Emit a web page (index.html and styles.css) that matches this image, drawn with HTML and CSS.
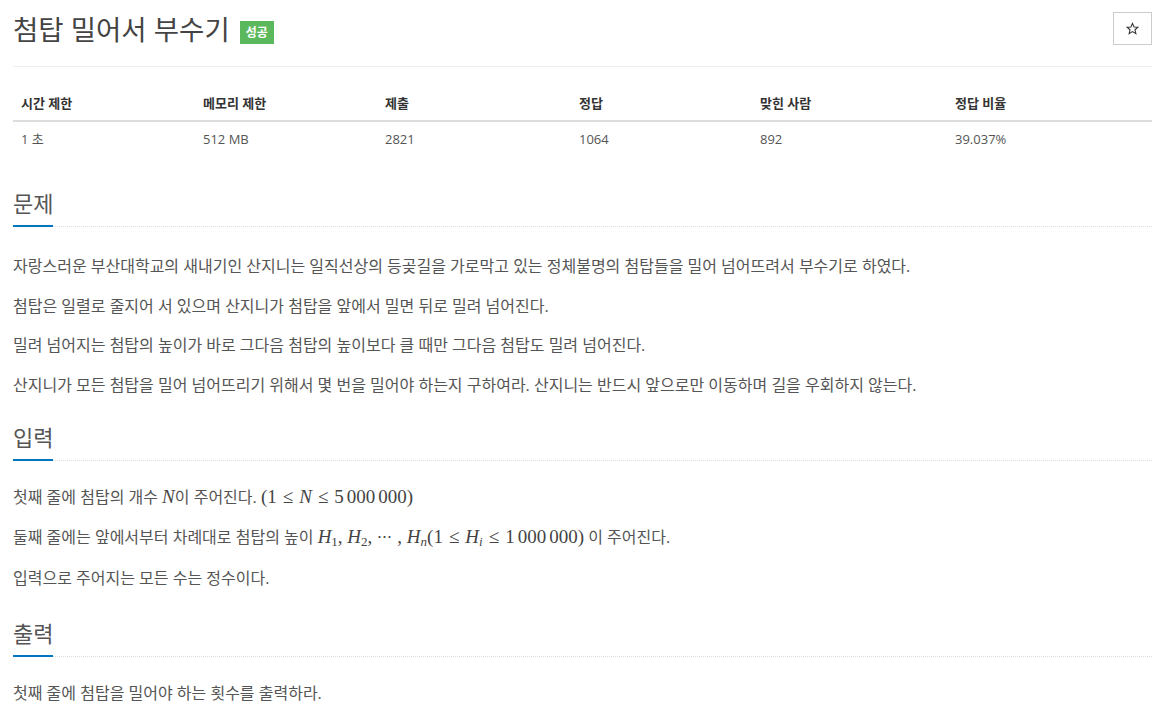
FILE: index.html
```html
<!DOCTYPE html>
<html lang="ko">
<head>
<meta charset="utf-8">
<title>첨탑 밀어서 부수기</title>
<link rel="stylesheet" href="styles.css">
</head>
<body>
<div class="page">
  <div class="page-header">
    <h1 class="title">첨탑 밀어서 부수기 <span class="label-success">성공</span></h1>
    <button class="star-btn" type="button" aria-label="즐겨찾기">
      <svg width="13" height="13" viewBox="0 0 24 24"><path d="M12 2.5l2.9 6.6 7.1.6-5.4 4.7 1.6 7-6.2-3.7-6.2 3.7 1.6-7L2 9.7l7.1-.6z" fill="none" stroke="#333" stroke-width="2" stroke-linejoin="miter"/></svg>
    </button>
  </div>
  <hr class="divider">

  <table class="info-table">
    <thead>
      <tr>
        <th class="c1">시간 제한</th>
        <th class="c2">메모리 제한</th>
        <th class="c3">제출</th>
        <th class="c4">정답</th>
        <th class="c5">맞힌 사람</th>
        <th class="c6">정답 비율</th>
      </tr>
    </thead>
    <tbody>
      <tr>
        <td>1 초 </td>
        <td>512 MB</td>
        <td>2821</td>
        <td>1064</td>
        <td>892</td>
        <td>39.037%</td>
      </tr>
    </tbody>
  </table>

  <section class="section section-desc">
    <div class="headline"><h2>문제</h2></div>
    <div class="problem-text">
      <p>자랑스러운 부산대학교의 새내기인 산지니는 일직선상의 등곶길을 가로막고 있는 정체불명의 첨탑들을 밀어 넘어뜨려서 부수기로 하였다.</p>
      <p>첨탑은 일렬로 줄지어 서 있으며 산지니가 첨탑을 앞에서 밀면 뒤로 밀려 넘어진다.</p>
      <p>밀려 넘어지는 첨탑의 높이가 바로 그다음 첨탑의 높이보다 클 때만 그다음 첨탑도 밀려 넘어진다.</p>
      <p>산지니가 모든 첨탑을 밀어 넘어뜨리기 위해서 몇 번을 밀어야 하는지 구하여라. 산지니는 반드시 앞으로만 이동하며 길을 우회하지 않는다.</p>
    </div>
  </section>

  <section class="section section-input">
    <div class="headline"><h2>입력</h2></div>
    <div class="problem-text">
      <p>첫째 줄에 첨탑의 개수 <span class="math"><i>N</i></span>이 주어진다. <span class="math">(1<span class="rel">≤</span><i>N</i><span class="rel">≤</span>5<span class="th"></span>000<span class="th"></span>000)</span></p>
      <p>둘째 줄에는 앞에서부터 차례대로 첨탑의 높이 <span class="math"><i>H</i><sub>1</sub>, <i>H</i><sub>2</sub>,<span class="dots">⋯</span>, <i>H</i><sub><i>n</i></sub>(1<span class="rel">≤</span><i>H</i><sub><i>i</i></sub><span class="rel">≤</span>1<span class="th"></span>000<span class="th"></span>000)</span> 이 주어진다.</p>
      <p>입력으로 주어지는 모든 수는 정수이다.</p>
    </div>
  </section>

  <section class="section section-output">
    <div class="headline"><h2>출력</h2></div>
    <div class="problem-text">
      <p>첫째 줄에 첨탑을 밀어야 하는 횟수를 출력하라.</p>
    </div>
  </section>
</div>
</body>
</html>
```

FILE: styles.css
```css
* { box-sizing: border-box; }

html, body {
  margin: 0;
  padding: 0;
  background: #fff;
}

body {
  font-family: "Open Sans", "Noto Sans CJK KR", sans-serif;
  color: #555;
  font-size: 14px;
}

.page {
  padding: 12px 15px 0 13px;
}

.page-header {
  display: flex;
  justify-content: space-between;
  align-items: flex-start;
}

.title {
  margin: 0;
  font-size: 27.5px;
  line-height: 36px;
  font-weight: 400;
  color: #444;
  display: flex;
  align-items: center;
}

.label-success {
  display: inline-block;
  margin-left: 10px;
  margin-top: 4px;
  background: #5cb85c;
  color: #fff;
  font-size: 12px;
  font-weight: 700;
  line-height: 23px;
  height: 23px;
  padding: 0 6px;
}

.star-btn {
  width: 39px;
  height: 33px;
  padding: 0;
  margin: 0;
  border: 1px solid #ccc;
  background: #fff;
  display: flex;
  align-items: center;
  justify-content: center;
}

.divider {
  border: 0;
  border-top: 1px solid #eee;
  margin: 18px 0 19px 0;
}

.info-table {
  width: 100%;
  border-collapse: collapse;
  margin-bottom: 33px;
}

.info-table th,
.info-table td {
  text-align: left;
  padding: 8px;
  line-height: 18px;
  font-size: 13px;
}

.info-table th {
  font-weight: 700;
  color: #333;
  border-bottom: 2px solid #ddd;
}

.info-table td { color: #555; }

.c1 { width: 182px; }
.c2 { width: 182px; }
.c3 { width: 194px; }
.c4 { width: 181px; }
.c5 { width: 195px; }

.section {
  display: flex;
  flex-direction: column;
}

.section-desc { margin-top: 33px; }
.section-input { margin-top: 23px; }
.section-output { margin-top: 26px; }

.headline {
  border-bottom: 1px dotted #ddd;
}

.headline h2 {
  display: inline-block;
  margin: 0 0 -1px 0;
  font-size: 22px;
  line-height: 28px;
  font-weight: 400;
  color: #555;
  padding-bottom: 8px;
  border-bottom: 2px solid #0076c0;
}

.problem-text {
  margin-top: 21px;
  font-size: 16px;
}

.section-desc .problem-text { margin-top: 24px; }

.problem-text p {
  margin: 0 0 9.5px 0;
  line-height: 30px;
}

.section-input .problem-text p { margin-bottom: 10px; }

.problem-text p:last-child { margin-bottom: 0; }

.math {
  font-family: "Liberation Serif", "DejaVu Serif", serif;
  font-size: 19px;
  color: #444;
}

.math i { font-style: italic; }

.math sub {
  font-size: 13px;
  vertical-align: -3px;
  line-height: 0;
}

.math .rel { padding: 0 6px; }

.math .dots {
  display: inline-block;
  font-size: 15px;
  padding: 0 5px;
}

.math .th {
  display: inline-block;
  width: 3px;
}
```
